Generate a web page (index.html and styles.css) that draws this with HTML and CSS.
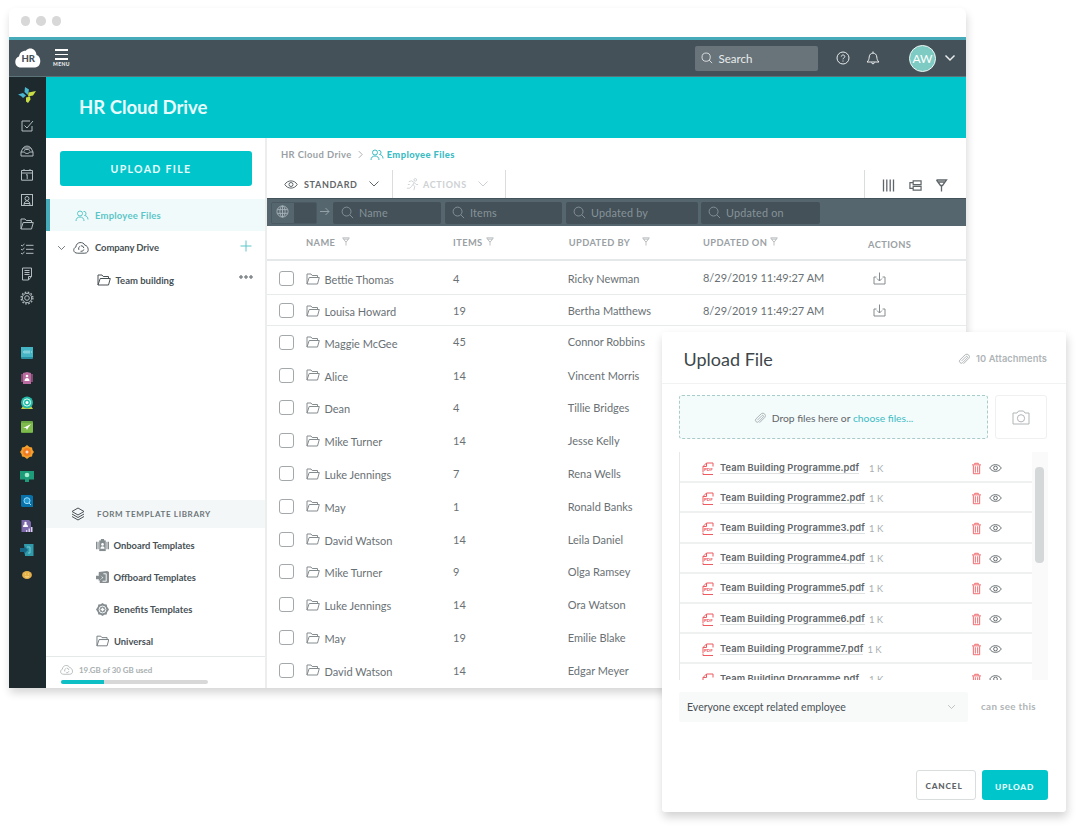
FILE: index.html
```html
<!DOCTYPE html>
<html lang="en">
<head>
  <meta charset="UTF-8" />
  <meta name="viewport" content="width=device-width, initial-scale=1.0"/>
  <title>HR Cloud Drive</title>
  <link rel="stylesheet" href="styles.css">
</head>
<body>
  <!-- Icon sprite -->
  <svg class="sprite" xmlns="http://www.w3.org/2000/svg">
    <symbol id="folder" viewBox="0 0 14 12"><path d="M1 11V1h4l1.200 1.500H11.500V4.500M1 11L3.200 4.500H13.300L11.500 11Z"/></symbol>
    <symbol id="users" viewBox="0 0 14 12"><circle cx="5" cy="3.500" r="2.500"/><path d="M1 11c0-2.500 1.500-4 4-4s4 1.500 4 4M8.500 1.500a2 2 0 1 1 1 4c2 .2 3.500 1.500 3.500 4"/></symbol>
    <symbol id="chevron" viewBox="0 0 12 8"><path d="M1.500 1.500L6 6l4.500-4.500"/></symbol>
    <symbol id="funnel" viewBox="0 0 12 13"><path d="M1 1h10L7 6.500H5L1 1M6 6.500V12.500M2.500 3h7"/></symbol>
    <symbol id="search" viewBox="0 0 14 14"><circle cx="6" cy="6" r="4.800"/><path d="M9.500 9.500L13 13"/></symbol>
    <symbol id="eye" viewBox="0 0 14 10"><path d="M.8 5C3.500.2 10.500.2 13.200 5 10.500 9.800 3.500 9.800.8 5Z"/><circle cx="7" cy="5" r="2"/></symbol>
    <symbol id="cloud" viewBox="0 0 18 14"><path d="M5 12.500C-.5 12.500 0 7 3 6 3.500 0 11 0 12.500 4c4 .2 5.500 8.500 0 8.500Z"/><path d="M6.200 9a3 3 0 0 1 1.500-4M8.500 4.600a3 3 0 0 1 3 2.500M11.500 8.500a3 3 0 0 1-3.500 2"/></symbol>
    <symbol id="download" viewBox="0 0 13 13"><path d="M3.500 5H1v7h11V5H9.500M6.500.5V9M4 6.500L6.500 9 9 6.500"/></symbol>
    <symbol id="clip" viewBox="0 0 14 14"><path d="M4 9.500L9.500 4a1.100 1.100 0 0 1 1.500 1.500L5.500 11.200a2.200 2.200 0 0 1-3.200-3.200L8.500 2a3 3 0 0 1 4.200 4.200L6.500 12.500"/></symbol>
    <symbol id="trash" viewBox="0 0 10 13"><path d="M0 2.500h10M3 2V.7h4V2M1.500 3v9.300h7V3M3.700 4v7M6.300 4v7"/></symbol>
    <symbol id="page" viewBox="0 0 12 13"><path d="M1 10V4.500L4.500 1H11V4.500M4.500 1v3.500H1M1 10.500v2h10"/></symbol>
    <symbol id="badge" viewBox="0 0 14 14"><rect x="3.500" y="1.500" width="7" height="11.500"/><rect x="5.300" y="0" width="3.400" height="2.500"/><path d="M0 3h1.500v8H0M2 3h.8v8H2M11.200 3h.8v8h-.8M12.500 3H14v8h-1.500"/><circle class="cut" cx="7" cy="5.800" r="1.400"/><path class="cut" d="M4.800 10.500c0-3.500 4.400-3.500 4.400 0Z"/></symbol>
    <symbol id="exit" viewBox="0 0 14 14"><path d="M3 1l9-1 2 1v11l-1 1H4v-3l4-3-5-3Z"/><path d="M0 5h3V3l4 4-4 4V9H0Z"/><path class="cutline" d="M8 3h3v8H7"/></symbol>
    <symbol id="medal" viewBox="0 0 14 14"><path d="M7 0l2 1.300 2.500.3.500 2.400L14 7l-2 3-.5 2.400-2.500.3L7 14l-2-1.300-2.500-.3L2 10 0 7l2-3 .5-2.400 2.500-.3Z"/><circle class="cutline" cx="7" cy="7" r="3.700"/><path class="cut" d="M6.300 5h1.400v1.300H9v1.400H7.700V9H6.300V7.700H5V6.300h1.300Z"/></symbol>
  </svg>

  <div class="window">
    <div class="titlebar"><i></i><i></i><i></i></div>

    <header class="topbar">
      <div class="logo">
        <svg viewBox="0 0 26 20"><path d="M6 19.500C-1.500 19.500-1 9.500 4 8.500 5 2.500 10 3 11 2.500 15-1.500 21 1 21.500 7 27 8.500 26.500 19.500 20 19.500Z"/></svg>
        <span>HR</span>
      </div>
      <div class="menu"><b></b><b></b><b></b><span>MENU</span></div>
      <div class="search"><svg class="icon"><use href="#search"/></svg>Search</div>
      <svg class="icon help" viewBox="0 0 14 14"><circle cx="7" cy="7" r="6"/><path d="M5.300 5.600c0-2.200 3.500-2.100 3.500 0 0 1.300-1.800 1.200-1.800 2.700M7 9.500v1"/></svg>
      <svg class="icon bell" viewBox="0 0 14 14"><path d="M1 11c1.800-1.500 2-3 2.200-5C3.500.8 10.500.8 10.800 6c.2 2 .4 3.500 2.200 5ZM7 .5V2M5.500 11.500c.3 1.800 2.700 1.800 3 0"/></svg>
      <div class="avatar">AW</div>
      <svg class="icon caret"><use href="#chevron"/></svg>
    </header>

    <div class="body">
      <nav class="rail">
        <div class="brand">
          <svg viewBox="0 0 20 18"><path fill="#49b8d0" d="M8 1l4 2.500-1 5.500-3.500-3ZM1 8.500L6 7l3 2.500L6 12 4 10Z"/><path fill="#c8dc45" d="M11.500 6.500L19 5l-3 4.500-5 1ZM9 11.500l4-1 .5 3L11 17l-2-1.500Z"/></svg>
        </div>
        <svg class="icon" viewBox="0 0 14 14"><path d="M10 2H2v10h10V7M4.500 6.500L7 9l6-7"/></svg>
        <svg class="icon" viewBox="0 0 14 14"><path d="M1 8l2-4h8l2 4v4H1ZM1 8h3.500c.5 2 4.500 2 5 0H13M3.500 4C4 1.500 10 1.500 10.500 4M4 6.500c1-1.500 5-1.500 6 0"/></svg>
        <svg class="icon" viewBox="0 0 14 14"><path d="M1.500 2.500h11v9.700h-11ZM1.500 5h11M4 1v2M10 1v2M6 7l1.200-.5V11"/></svg>
        <svg class="icon" viewBox="0 0 14 14"><rect x="1.500" y="1.500" width="11" height="11"/><circle cx="7" cy="5.500" r="2"/><path d="M4 12c0-5.500 6-5.500 6 0M4 10.500h6"/></svg>
        <svg class="icon" viewBox="0 -1 14 14"><use href="#folder" width="14" height="12"/></svg>
        <svg class="icon" viewBox="0 0 14 14"><path d="M1 3l1.200 1L4.500 2M1 7l1.200 1L4.500 6M1 11l1.200 1 2.300-2M6 3.300h7.500M6 7.300h7.500M6 11.300h7.500"/></svg>
        <svg class="icon" viewBox="0 0 14 14"><path d="M2.500 1h9v8.500L8.500 13h-6ZM11.500 9.500h-3V13M4.500 3.500h5M4.500 5.500h5M4.500 7.500h5"/></svg>
        <svg class="icon" viewBox="0 0 14 14"><circle cx="7" cy="7" r="4.700"/><circle cx="7" cy="7" r="2.300"/><circle class="teeth" cx="7" cy="7" r="5.900"/></svg>

        <svg class="app app-first" viewBox="0 0 14 14"><rect x="1" y="1" width="12" height="12" rx="1" fill="#2b8fa2"/><rect x="1" y="1" width="12" height="10" fill="#45b5c6"/><path d="M3 6h1M5 4.500v3M7 4.500v3M9 4.500v3M11 6h1" stroke="#bdeaf0"/></svg>
        <svg class="app" viewBox="0 0 14 14"><path d="M1 3h12v8H1Z" fill="#7d4a72"/><path d="M3 2l4-1 4 1v11H3Z" fill="#ba6ba0"/><circle cx="7" cy="5" r="1.300" fill="#fff"/><path d="M4.500 10c0-4 5-4 5 0Z" fill="#fff"/></svg>
        <svg class="app" viewBox="0 0 14 14"><path d="M1 13l2-3h8l2 3Z" fill="#c8cf43"/><circle cx="7" cy="6.500" r="6" fill="#26b9a7"/><circle cx="7" cy="6.500" r="3.600" fill="none" stroke="#d8fff5"/><circle cx="7" cy="6.500" r="1.500" fill="#fff"/></svg>
        <svg class="app" viewBox="0 0 14 14"><rect x="1" y="1" width="12" height="12" rx="1" fill="#6aa641"/><path d="M1 3h12v9H1Z" fill="#7eba4c"/><path d="M3 7.500l2-.5 6-3-3 4-1 2-1-2Z" fill="#fff"/></svg>
        <svg class="app" viewBox="0 0 14 14"><path d="M7 0l2.500 2 2.500.5.500 2.500L14 7l-1.500 2-.5 2.500-2.500.5L7 14l-2.500-2-2.500-.5L1.500 9 0 7l1.500-2L2 2.500 4.500 2Z" fill="#f2a02d"/><circle cx="7" cy="7" r="3.900" fill="#f27d20"/><path d="M5.500 7h3M7 5.500v3" stroke="#fff"/></svg>
        <svg class="app" viewBox="0 0 14 14"><path d="M0 2h14v8.500H0ZM5 10h4v3H5Z" fill="#1e9b78"/><circle cx="7" cy="6" r="2.300" fill="#a7edcf"/></svg>
        <svg class="app" viewBox="0 0 14 14"><path d="M1 1h10l2 1v11H2l-1-1Z" fill="#0871aa"/><circle cx="7" cy="6.700" r="3" fill="#2398d2" stroke="#9bddfa"/><path d="M9 9l2 2" stroke="#9bddfa"/></svg>
        <svg class="app" viewBox="0 0 14 14"><path d="M1.500 1H9l2 2v10H1.500Z" fill="#7c69aa"/><circle cx="5.500" cy="4" r="1.200" fill="#fff"/><path d="M3 8c0-4 5-4 5 0Z" fill="#fff"/><path d="M6 11h1.300v2H6M8.500 9.500h1.500V13H8.500M11 8h1.500v5H11" fill="#dcd0ee"/></svg>
        <svg class="app" viewBox="0 0 14 14"><path d="M4 1h9.500v12H5Z" fill="#3099aa"/><path d="M0 5h4V3l4 4-4 4V9H0Z" fill="#176784"/><path d="M7 4h3v6H8" fill="none" stroke="#75cbd4"/></svg>
        <svg class="app" viewBox="0 0 14 14"><ellipse cx="7" cy="7" rx="4.900" ry="4" fill="#e5b14b"/><path d="M5 6h1M8 6h1M5 8.500c1 .7 3 .7 4 0" fill="none" stroke="#fff0b5" stroke-width=".7"/></svg>
      </nav>

      <div class="page">
        <div class="banner"><h1>HR Cloud Drive</h1></div>

        <div class="columns">
          <aside class="sidebar">
            <button class="upload-file">UPLOAD FILE</button>
            <div class="side-item active"><svg class="icon users"><use href="#users"/></svg><span>Employee Files</span></div>
            <div class="side-item drive"><svg class="icon chev"><use href="#chevron"/></svg><svg class="icon cloud"><use href="#cloud"/></svg><span>Company Drive</span>
              <svg class="icon plus" viewBox="0 0 12 12"><path d="M6 .5v11M.5 6h11"/></svg></div>
            <div class="side-item team"><svg class="icon folder"><use href="#folder"/></svg><span>Team building</span>
              <svg class="icon dots" viewBox="0 0 14 4"><circle cx="2" cy="2" r="1.200"/><circle cx="7" cy="2" r="1.200"/><circle cx="12" cy="2" r="1.200"/></svg></div>

            <div class="library">
              <div class="library-head"><svg class="icon" viewBox="0 0 14 14"><path d="M7 1l6 3.500L7 8 1 4.500ZM1 7l6 3.500L13 7M1 9.500L7 13l6-3.500"/></svg>FORM TEMPLATE LIBRARY</div>
              <div class="template"><svg class="glyph"><use href="#badge"/></svg>Onboard Templates</div>
              <div class="template"><svg class="glyph"><use href="#exit"/></svg>Offboard Templates</div>
              <div class="template"><svg class="glyph"><use href="#medal"/></svg>Benefits Templates</div>
              <div class="template"><svg class="icon folder"><use href="#folder"/></svg>Universal</div>
            </div>

            <div class="storage">
              <div class="storage-text"><svg class="icon"><use href="#cloud"/></svg>19.GB of 30 GB used</div>
              <div class="bar"><div class="bar-fill"></div></div>
            </div>
          </aside>

          <main class="main">
            <div class="breadcrumb"><span>HR Cloud Drive</span><svg class="icon sep" viewBox="0 0 6 10"><path d="M1 1l4 4-4 4"/></svg><svg class="icon users"><use href="#users"/></svg><b>Employee Files</b></div>

            <div class="toolbar">
              <div class="tool standard"><svg class="icon eye"><use href="#eye"/></svg>STANDARD<svg class="icon chev"><use href="#chevron"/></svg></div>
              <div class="tool actions"><svg class="icon run" viewBox="0 0 14 14"><circle cx="10" cy="2" r="1.400"/><path d="M3 4l3-1 3 2-3 4-2 2H1M7.500 7l2 2-1 4M9 5l2 2h2M2 7h2"/></svg>ACTIONS<svg class="icon chev"><use href="#chevron"/></svg></div>
              <div class="views">
                <svg class="icon lines" viewBox="0 0 12 13"><path d="M1 .5v12M4.300.5v12M7.700.5v12M11 .5v12"/></svg>
                <svg class="icon tree" viewBox="0 0 14 13"><path d="M4.500 1.500H13v4H4.500ZM4.500 7.500H13v4H4.500ZM4 3.500H1v6h3"/></svg>
                <svg class="icon fun"><use href="#funnel"/></svg>
              </div>
            </div>

            <div class="filters">
              <div class="scope"><span><svg class="icon" viewBox="0 0 14 14"><circle cx="7" cy="7" r="6"/><ellipse cx="7" cy="7" rx="2.800" ry="6"/><path d="M1.500 5h11M1.500 9h11M7 1v12"/></svg></span></div>
              <svg class="icon arrow" viewBox="0 0 10 8"><path d="M0 4h9M5.500.5L9 4 5.500 7.500"/></svg>
              <div class="field f-name"><svg class="icon"><use href="#search"/></svg>Name</div>
              <div class="field f-items"><svg class="icon"><use href="#search"/></svg>Items</div>
              <div class="field f-by"><svg class="icon"><use href="#search"/></svg>Updated by</div>
              <div class="field f-on"><svg class="icon"><use href="#search"/></svg>Updated on</div>
            </div>

            <div class="row head">
              <i></i>
              <div>NAME<svg class="icon far"><use href="#funnel"/></svg></div>
              <div>ITEMS<svg class="icon"><use href="#funnel"/></svg></div>
              <div class="h-by">UPDATED BY<svg class="icon farther"><use href="#funnel"/></svg></div>
              <div>UPDATED ON<svg class="icon"><use href="#funnel"/></svg></div>
              <div class="h-actions">ACTIONS</div>
            </div>
            <div class="row first"><i class="check"></i><div><svg class="icon folder"><use href="#folder"/></svg><span>Bettie Thomas</span></div><div>4</div><div>Ricky Newman</div><div class="date">8/29/2019 11:49:27 AM</div><div><svg class="icon dl"><use href="#download"/></svg></div></div>
            <div class="row second"><i class="check"></i><div><svg class="icon folder"><use href="#folder"/></svg><span>Louisa Howard</span></div><div>19</div><div>Bertha Matthews</div><div>8/29/2019 11:49:27 AM</div><div><svg class="icon dl"><use href="#download"/></svg></div></div>
            <div class="row"><i class="check"></i><div><svg class="icon folder"><use href="#folder"/></svg><span>Maggie McGee</span></div><div class="raised">45</div><div class="raised">Connor Robbins</div></div>
            <div class="row"><i class="check"></i><div><svg class="icon folder"><use href="#folder"/></svg><span>Alice</span></div><div>14</div><div>Vincent Morris</div></div>
            <div class="row"><i class="check"></i><div><svg class="icon folder"><use href="#folder"/></svg><span>Dean</span></div><div>4</div><div>Tillie Bridges</div></div>
            <div class="row"><i class="check"></i><div><svg class="icon folder"><use href="#folder"/></svg><span>Mike Turner</span></div><div>14</div><div>Jesse Kelly</div></div>
            <div class="row"><i class="check"></i><div><svg class="icon folder"><use href="#folder"/></svg><span>Luke Jennings</span></div><div>7</div><div>Rena Wells</div></div>
            <div class="row"><i class="check"></i><div><svg class="icon folder"><use href="#folder"/></svg><span>May</span></div><div>1</div><div>Ronald Banks</div></div>
            <div class="row"><i class="check"></i><div><svg class="icon folder"><use href="#folder"/></svg><span>David Watson</span></div><div>14</div><div>Leila Daniel</div></div>
            <div class="row"><i class="check"></i><div><svg class="icon folder"><use href="#folder"/></svg><span>Mike Turner</span></div><div>9</div><div>Olga Ramsey</div></div>
            <div class="row"><i class="check"></i><div><svg class="icon folder"><use href="#folder"/></svg><span>Luke Jennings</span></div><div>14</div><div>Ora Watson</div></div>
            <div class="row"><i class="check"></i><div><svg class="icon folder"><use href="#folder"/></svg><span>May</span></div><div>19</div><div>Emilie Blake</div></div>
            <div class="row"><i class="check"></i><div><svg class="icon folder"><use href="#folder"/></svg><span>David Watson</span></div><div>14</div><div>Edgar Meyer</div></div>
          </main>
        </div>
      </div>
    </div>
  </div>

  <!-- Upload dialog -->
  <div class="modal">
    <div class="modal-head">
      <h2>Upload File</h2>
      <div class="count"><svg class="icon clip"><use href="#clip"/></svg>10 Attachments</div>
    </div>
    <div class="drop">
      <div class="dropzone"><svg class="icon clip"><use href="#clip"/></svg><span>Drop files here or <a>choose files...</a></span></div>
      <div class="camera"><svg class="icon" viewBox="0 0 18 15"><path d="M1 3h4l1.500-2h5L13 3h4v11H1Z"/><circle cx="9" cy="8.300" r="3.600"/></svg></div>
    </div>
    <div class="list">
      <div class="files">
        <div class="file"><div class="pdf"><svg class="icon"><use href="#page"/></svg><span>PDF</span></div><span class="fname">Team Building Programme.pdf</span><span class="size wide">1 K</span><svg class="icon trash"><use href="#trash"/></svg><svg class="icon eye"><use href="#eye"/></svg></div>
        <div class="file"><div class="pdf"><svg class="icon"><use href="#page"/></svg><span>PDF</span></div><span class="fname">Team Building Programme2.pdf</span><span class="size">1 K</span><svg class="icon trash"><use href="#trash"/></svg><svg class="icon eye"><use href="#eye"/></svg></div>
        <div class="file"><div class="pdf"><svg class="icon"><use href="#page"/></svg><span>PDF</span></div><span class="fname">Team Building Programme3.pdf</span><span class="size">1 K</span><svg class="icon trash"><use href="#trash"/></svg><svg class="icon eye"><use href="#eye"/></svg></div>
        <div class="file"><div class="pdf"><svg class="icon"><use href="#page"/></svg><span>PDF</span></div><span class="fname">Team Building Programme4.pdf</span><span class="size">1 K</span><svg class="icon trash"><use href="#trash"/></svg><svg class="icon eye"><use href="#eye"/></svg></div>
        <div class="file"><div class="pdf"><svg class="icon"><use href="#page"/></svg><span>PDF</span></div><span class="fname">Team Building Programme5.pdf</span><span class="size">1 K</span><svg class="icon trash"><use href="#trash"/></svg><svg class="icon eye"><use href="#eye"/></svg></div>
        <div class="file"><div class="pdf"><svg class="icon"><use href="#page"/></svg><span>PDF</span></div><span class="fname">Team Building Programme6.pdf</span><span class="size">1 K</span><svg class="icon trash"><use href="#trash"/></svg><svg class="icon eye"><use href="#eye"/></svg></div>
        <div class="file"><div class="pdf"><svg class="icon"><use href="#page"/></svg><span>PDF</span></div><span class="fname">Team Building Programme7.pdf</span><span class="size">1 K</span><svg class="icon trash"><use href="#trash"/></svg><svg class="icon eye"><use href="#eye"/></svg></div>
        <div class="file"><div class="pdf"><svg class="icon"><use href="#page"/></svg></div><span class="fname">Team Building Programme.pdf</span><span class="size wide">1 K</span><svg class="icon trash"><use href="#trash"/></svg><svg class="icon eye"><use href="#eye"/></svg></div>
      </div>
      <div class="track"><div class="thumb"></div></div>
    </div>
    <div class="share">
      <div class="select">Everyone except related employee<svg class="icon chev"><use href="#chevron"/></svg></div>
      <span>can see this</span>
    </div>
    <div class="buttons">
      <button class="cancel">CANCEL</button>
      <button class="upload">UPLOAD</button>
    </div>
  </div>
</body>
</html>
```
FILE: styles.css
```css
* {
  box-sizing: border-box;
}

body {
  position: relative;
  width: 1080px;
  height: 830px;
  margin: 0;
  padding: 8px 0 0 9px;
  overflow: hidden;
  background: #fff;
  font-family: Lato, sans-serif;
  font-size: 11px;
  color: #5f666a;
}

h1, h2 {
  margin: 0;
}

button {
  font-family: Lato, sans-serif;
  border: none;
  padding: 0;
}

.sprite {
  position: absolute;
  width: 0;
  height: 0;
}

.icon {
  fill: none;
  stroke: currentColor;
  stroke-width: 1;
  flex-shrink: 0;
}

/* Browser window */
.window {
  width: 957px;
  height: 680px;
  display: flex;
  flex-direction: column;
  border-radius: 6px 6px 0 0;
  background: #fff;
  box-shadow: 1px 5px 8px rgba(0, 0, 0, 0.16);
}

.titlebar {
  height: 29px;
  display: flex;
  align-items: center;
  gap: 6px;
  padding: 0 0 3px 11.500px;
}

.titlebar i {
  width: 9.500px;
  height: 9.500px;
  border-radius: 50%;
  background: #d8d8d8;
}

.topbar {
  height: 40px;
  display: flex;
  align-items: center;
  background: #455158;
  border-top: 3px solid #46aab9;
  border-bottom: 1px solid #5c7378;
  color: #e8eced;
}

.logo {
  position: relative;
  width: 26px;
  height: 20px;
  margin-left: 6px;
}

.logo svg {
  width: 26px;
  height: 20px;
  fill: #fff;
}

.logo span {
  position: absolute;
  top: 5px;
  left: 6.500px;
  font-size: 9.5px;
  font-weight: 900;
  line-height: 12px;
  color: #455158;
}

.menu {
  width: 18px;
  margin-left: 11.500px;
  display: flex;
  flex-direction: column;
  align-items: center;
  gap: 3px;
}

.menu b {
  width: 13px;
  height: 1.500px;
  background: #fff;
}

.menu span {
  margin-top: -1px;
  font-size: 5px;
  font-weight: 900;
  line-height: 5px;
  letter-spacing: 0.5px;
}

.search {
  width: 123px;
  height: 25px;
  margin-left: 624px;
  padding-left: 6px;
  display: flex;
  align-items: center;
  gap: 6px;
  border-radius: 2px;
  background: #69747a;
  font-size: 11.5px;
}

.search .icon {
  width: 12px;
  height: 12px;
}

.help {
  width: 14px;
  height: 14px;
  margin-left: 18px;
}

.bell {
  width: 14px;
  height: 14px;
  margin-left: 16px;
}

.avatar {
  width: 27px;
  height: 27px;
  margin-left: 29.500px;
  border: 1px solid #eef8f6;
  border-radius: 50%;
  background: #7dcbc2;
  color: #fff;
  font-size: 12px;
  line-height: 25px;
  text-align: center;
}

.caret {
  width: 12px;
  height: 8px;
  margin-left: 8px;
  stroke-width: 1.500;
}

.body {
  flex: 1;
  display: flex;
}

/* Icon rail */
.rail {
  width: 37px;
  padding-right: 1px;
  display: flex;
  flex-direction: column;
  align-items: center;
  gap: 10.6px;
  background: #1e292d;
  color: #b3bdc1;
}

.rail > svg {
  width: 14px;
  height: 14px;
  flex-shrink: 0;
}

.rail .teeth {
  stroke-width: 1.300;
  stroke-dasharray: 1.600 1.489;
}

.brand {
  height: 31.5px;
  padding-top: 9px;
}

.brand svg {
  width: 20px;
  height: 18px;
}

.rail .app-first {
  margin-top: 30.500px;
}

.page {
  flex: 1;
  display: flex;
  flex-direction: column;
}

.banner {
  height: 61px;
  padding-left: 33px;
  background: #00c6cb;
}

.banner h1 {
  font-size: 18.5px;
  line-height: 60px;
  color: #e9fbfb;
}

.columns {
  flex: 1;
  display: flex;
}

/* Sidebar */
.sidebar {
  width: 221px;
  display: flex;
  flex-direction: column;
  border-right: 2px solid #eceeee;
}

.upload-file {
  width: 192px;
  height: 35px;
  flex-shrink: 0;
  margin: 13px 0 13px 14px;
  padding-right: 10px;
  border-radius: 3px;
  background: #00c6cb;
  color: #e9fbfb;
  font-size: 10.5px;
  font-weight: 700;
  letter-spacing: 1.350px;
}

.side-item {
  height: 32px;
  display: flex;
  align-items: center;
  font-size: 9.5px;
  font-weight: 700;
  color: #485156;
}

.side-item.active {
  padding: 1px 0 0 25px;
  border-left: 4px solid #46aab9;
  background: #f1fafa;
  color: #5bc6c8;
  letter-spacing: 0.2px;
}

.users {
  width: 14px;
  height: 12px;
  margin-right: 6px;
}

.folder {
  width: 14px;
  height: 12px;
}

.drive {
  padding: 1px 14px 0 11px;
  letter-spacing: -0.1px;
}

.drive .chev {
  width: 9px;
  height: 6px;
  margin-right: 7px;
}

.drive .cloud {
  width: 17px;
  height: 14px;
  margin-right: 5px;
}

.drive .plus {
  width: 12px;
  height: 12px;
  margin: 0 -1px 4px auto;
  color: #5bc6c8;
}

.team {
  height: 33px;
  padding: 1px 12px 0 50.500px;
}

.team .folder {
  margin-right: 5px;
}

.team .dots {
  width: 14px;
  height: 4px;
  margin-left: auto;
  margin-bottom: 6px;
}

.library {
  margin-top: auto;
}

.library-head {
  height: 28px;
  padding-left: 25px;
  margin-bottom: 1px;
  display: flex;
  align-items: center;
  gap: 12px;
  background: #f4f7f7;
  font-size: 8px;
  font-weight: 700;
  letter-spacing: 0.650px;
  color: #6c7579;
}

.library-head svg {
  width: 14px;
  height: 14px;
  color: #485156;
}

.template {
  height: 32px;
  padding-left: 49.500px;
  display: flex;
  align-items: center;
  gap: 5px;
  font-size: 9.4px;
  font-weight: 700;
  color: #485156;
}

.template .folder {
  width: 13.500px;
  color: #747c80;
}

.glyph {
  width: 13px;
  height: 13px;
  fill: #858d91;
}

.cut {
  fill: #fff;
}

.cutline {
  fill: none;
  stroke: #fff;
}

.storage {
  height: 32px;
  margin-top: -1px;
  padding: 6px 0 0 14px;
  border-top: 1px solid #e6e9e9;
}

.storage-text {
  height: 14px;
  display: flex;
  align-items: center;
  gap: 5px;
  font-size: 7.9px;
  font-weight: 700;
  color: #a9afb1;
}

.storage-text svg {
  width: 14px;
  height: 12px;
}

.bar {
  width: 147px;
  height: 4px;
  margin: 3px 0 0 1px;
  border-radius: 2px;
  background: #d8d8d8;
}

.bar-fill {
  width: 43px;
  height: 4px;
  border-radius: 2px 0 0 2px;
  background: #0fbfc6;
}

/* Files table */
.main {
  flex: 1;
}

.breadcrumb {
  height: 32px;
  padding: 1px 0 0 14px;
  display: flex;
  align-items: center;
  font-size: 9.4px;
  font-weight: 700;
  letter-spacing: 0.4px;
  color: #9aa1a4;
}

.breadcrumb .sep {
  width: 5px;
  height: 9px;
  margin: 0 7px 0 6px;
}

.breadcrumb .users {
  margin-right: 3px;
  color: #3cbcc4;
}

.breadcrumb b {
  color: #3cbcc4;
}

.toolbar {
  height: 28px;
  display: flex;
  font-weight: 700;
}

.tool {
  display: flex;
  align-items: center;
  border-right: 1px solid #d9dddd;
  font-size: 9px;
  letter-spacing: 0.650px;
}

.standard {
  width: 126px;
  padding-left: 17px;
}

.actions {
  width: 113px;
  padding-left: 13px;
  color: #cdd1d3;
}

.tool .eye {
  width: 14px;
  height: 11px;
  margin-right: 6px;
}

.tool .run {
  width: 13px;
  height: 13px;
  margin-right: 4px;
}

.tool .chev {
  width: 12px;
  height: 8px;
  margin-left: 10px;
}

.views {
  width: 102px;
  margin-left: auto;
  padding: 2px 0 0 17px;
  display: flex;
  align-items: center;
  gap: 13.500px;
  border-left: 1px solid #d9dddd;
}

.views .icon {
  width: 13px;
  height: 13px;
  stroke-width: 1.300;
}

.filters {
  height: 28px;
  padding-left: 4px;
  display: flex;
  align-items: center;
  background: #56666f;
  border-top: 1px solid #44525a;
}

.scope {
  width: 46px;
  height: 22px;
  border: 1px solid #4a5962;
  border-radius: 2px;
  background: #445158;
}

.scope span {
  width: 22px;
  height: 20px;
  padding: 0 2px 2px 0;
  display: flex;
  align-items: center;
  justify-content: center;
  background: #56666f;
  color: #a8b3b8;
}

.scope svg {
  width: 13px;
  height: 13px;
}

.arrow {
  width: 10px;
  height: 9px;
  margin: 0 3px 2px 3px;
  color: #94a1a7;
}

.field {
  height: 22px;
  padding-left: 8px;
  display: flex;
  align-items: center;
  gap: 5px;
  border-radius: 2px;
  background: #445158;
  color: #87939a;
  font-size: 10.8px;
  letter-spacing: 0.2px;
}

.field svg {
  width: 13px;
  height: 13px;
}

.f-name {
  width: 108px;
  margin-right: 4px;
}

.f-items {
  width: 117px;
  margin-right: 4px;
}

.f-by {
  width: 132px;
  margin-right: 3px;
}

.f-on {
  width: 119px;
}

.f-items,
.f-by,
.f-on {
  padding-left: 7px;
}

.row {
  height: 32.800px;
  display: grid;
  grid-template-columns: 39px 147px 114.700px 135.300px 170px auto;
  align-items: center;
  color: #6a7175;
}

.row > div {
  display: flex;
  align-items: center;
}

.row .folder {
  margin-right: 4.500px;
  color: #858c8f;
}

.row span {
  padding-top: 2px;
}

.head {
  height: 35px;
  border-bottom: 2px solid #e5e8e8;
  color: #9aa1a4;
  font-size: 9.3px;
  font-weight: 700;
  letter-spacing: 0.400px;
}

.head .icon {
  width: 8px;
  height: 9px;
  margin: 0 0 2px 3px;
}

.head .far {
  margin-left: 7px;
}

.head .farther {
  margin-left: 12px;
}

.head .h-by {
  padding-left: 1px;
}

.head .h-actions {
  margin-left: -5px;
  padding-top: 4px;
}

.first {
  height: 34px;
  padding-top: 2px;
  border-bottom: 1px solid #e8ebeb;
}

.second {
  height: 31px;
  padding-top: 1px;
  border-bottom: 1px solid #e8ebeb;
}

.row .date {
  padding-bottom: 3px;
}

.row .raised {
  padding-bottom: 2px;
}

.check {
  width: 15px;
  height: 15px;
  margin-left: 12px;
  border: 1px solid #a3a9ab;
  border-radius: 3px;
}

.dl {
  width: 13px;
  height: 13px;
  color: #858c8f;
}

/* Upload dialog */
.modal {
  position: absolute;
  top: 332px;
  left: 662px;
  width: 404px;
  height: 480px;
  border-radius: 3px;
  background: #fff;
  box-shadow: 1px 5px 10px rgba(0, 0, 0, 0.18);
}

.modal-head {
  height: 52px;
  padding: 2px 19px 0 21.500px;
  display: flex;
  align-items: center;
  justify-content: space-between;
  border-bottom: 1px solid #f1f3f3;
}

.modal-head h2 {
  font-size: 18px;
  font-weight: 400;
  color: #3d474b;
}

.count {
  display: flex;
  align-items: center;
  gap: 6px;
  font-family: Inter, sans-serif;
  font-size: 9.3px;
  font-weight: 600;
  letter-spacing: 0.100px;
  color: #b0b5b7;
}

.clip {
  width: 12px;
  height: 12px;
  color: #a5abad;
}

.drop {
  padding: 11px 19px 0 17px;
  display: flex;
  justify-content: space-between;
}

.dropzone {
  width: 309px;
  height: 44px;
  padding-top: 2px;
  display: flex;
  align-items: center;
  justify-content: center;
  gap: 6px;
  border: 1px dashed #a9cbc9;
  border-radius: 3px;
  background: #f4fbfb;
  font-size: 10.3px;
}

.dropzone a {
  color: #3cbcc4;
}

.camera {
  width: 52px;
  height: 44px;
  display: flex;
  align-items: center;
  justify-content: center;
  border: 1px solid #eff1f1;
  border-radius: 3px;
  color: #b0b5b7;
}

.camera svg {
  width: 18px;
  height: 15px;
}

.list {
  height: 228px;
  margin: 13px 18px 0 17px;
  display: flex;
  overflow: hidden;
}

.files {
  width: 353px;
  padding-top: 1px;
  border-left: 1px solid #e6e9e9;
}

.file {
  height: 30.200px;
  padding: 2px 30px 0 22px;
  display: flex;
  align-items: center;
  border-bottom: 2px solid #eff1f1;
}

.pdf {
  position: relative;
  width: 12px;
  height: 13px;
  color: #ee5a5f;
}

.pdf svg {
  display: block;
  width: 12px;
  height: 13px;
}

.pdf span {
  position: absolute;
  top: 5px;
  left: 2px;
  font-size: 4.5px;
  font-weight: 900;
  line-height: 5px;
}

.fname {
  margin-left: 6px;
  border-bottom: 1px solid #dfe2e3;
  font-family: Inter, sans-serif;
  font-size: 9.3px;
  font-weight: 600;
  line-height: 10px;
  letter-spacing: 0.110px;
}

.size {
  margin-left: 4px;
  font-size: 9.5px;
  color: #a9afb1;
}

.size.wide {
  margin-left: 10px;
}

.trash {
  width: 9px;
  height: 13px;
  margin-left: auto;
  margin-right: 8px;
  color: #ee5a5f;
}

.file .eye {
  width: 13px;
  height: 10px;
}

.track {
  width: 16px;
  padding: 15px 0 0 3px;
  background: #fafafa;
}

.thumb {
  width: 9px;
  height: 96px;
  border-radius: 4px;
  background: #d5d8d8;
}

.share {
  margin: 12px 0 0 17px;
  display: flex;
  font-size: 9.8px;
  font-weight: 700;
  letter-spacing: 0.350px;
  color: #b0b5b7;
}

.share span {
  margin: 8px 0 0 13px;
}

.select {
  width: 289px;
  height: 30px;
  padding: 0 12px 0 8px;
  display: flex;
  align-items: center;
  justify-content: space-between;
  border-radius: 2px;
  background: #f8f9f9;
  font-size: 10.5px;
  font-weight: 400;
  letter-spacing: 0.020px;
  color: #485156;
}

.select svg {
  width: 9px;
  height: 6px;
  color: #a9afb1;
}

.buttons {
  margin: 48px 18px 0 0;
  display: flex;
  justify-content: flex-end;
  gap: 6px;
}

.buttons button {
  height: 30px;
  border-radius: 3px;
  font-size: 8.3px;
  font-weight: 900;
  letter-spacing: 0.8px;
}

.cancel {
  width: 60px;
  padding: 2px 4px 0 0;
  border: 1px solid #d9dddd;
  background: #fff;
  color: #5f666a;
}

.upload {
  width: 66px;
  padding: 4px 1px 0 0;
  background: #00c6cb;
  color: #e9fbfb;
}
```
